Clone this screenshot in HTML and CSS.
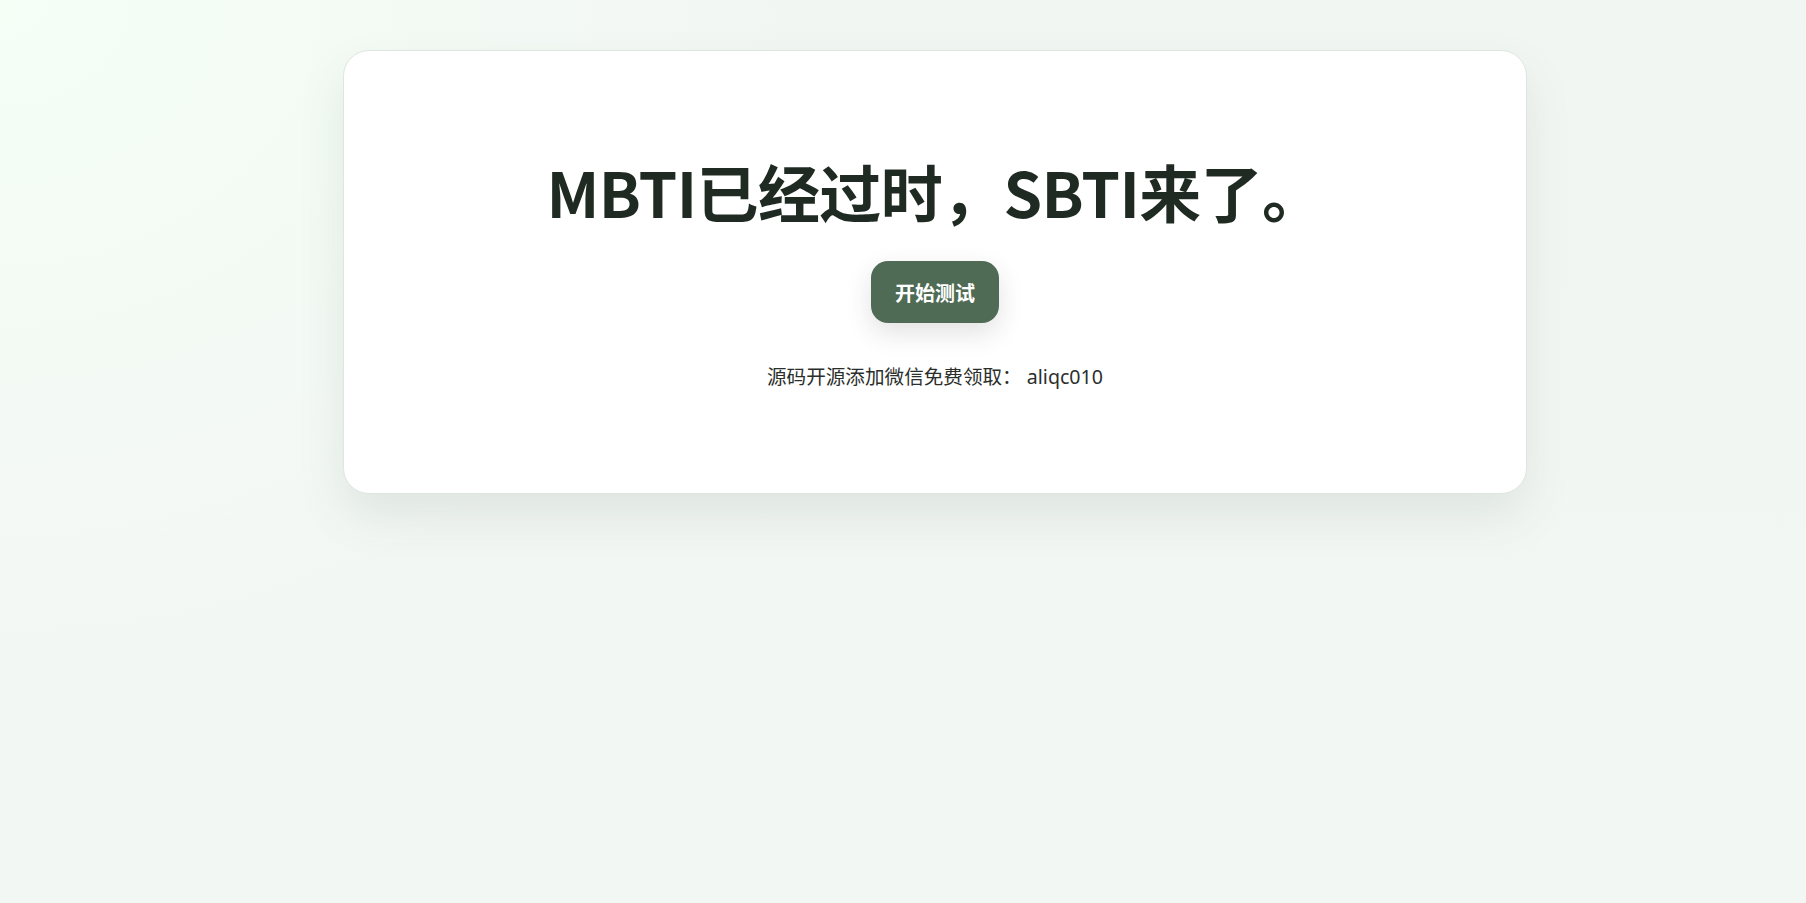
FILE: index.html
```html
<!DOCTYPE html>
<html lang="zh-CN">
<head>
<meta charset="utf-8">
<title>SBTI</title>
<link rel="stylesheet" href="styles.css">
</head>
<body>
<main class="page">
  <section class="card">
    <h1 class="title">MBTI已经过时，SBTI来了。</h1>
    <button class="start-btn" type="button">开始测试</button>
    <p class="note">源码开源添加微信免费领取： aliqc010</p>
  </section>
</main>
</body>
</html>
```

FILE: styles.css
```css
html, body {
  margin: 0;
  padding: 0;
}

body {
  min-height: 100vh;
  font-family: "Noto Sans", "Noto Sans CJK SC", sans-serif;
  background:
    radial-gradient(ellipse 1100px 900px at 0 0, #f5fff6 0%, rgba(245,255,246,0) 75%),
    linear-gradient(180deg, #f2f6f3 0%, #f3f7f4 100%);
  color: #1f2a22;
}

.page {
  padding: 50px 0 0 64px;
  box-sizing: border-box;
}

.card {
  width: 1184px;
  box-sizing: border-box;
  margin: 0 auto;
  background: #ffffff;
  border: 1px solid #dde7e0;
  border-radius: 26px;
  box-shadow: 0 22px 48px rgba(50, 80, 60, 0.10);
  padding: 96px 40px 102px;
  display: flex;
  flex-direction: column;
  align-items: center;
}

.title {
  margin: 0;
  font-family: "Noto Sans CJK SC", sans-serif;
  font-weight: 700;
  font-size: 62px;
  line-height: 88px;
  letter-spacing: -0.6px;
  color: #1f2a22;
}

.start-btn {
  margin-top: 26px;
  height: 62px;
  padding: 0 24px;
  border: none;
  border-radius: 17px;
  background: #4f6b55;
  color: #ffffff;
  font-family: "Noto Sans CJK SC", sans-serif;
  font-weight: 700;
  font-size: 20px;
  box-shadow: 0 10px 26px rgba(40, 50, 45, 0.14);
  cursor: pointer;
}

.note {
  margin: 40px 0 0;
  font-family: "Noto Sans", "Noto Sans CJK SC", sans-serif;
  font-size: 19.6px;
  line-height: 28px;
  color: #2b2f2c;
}
```
